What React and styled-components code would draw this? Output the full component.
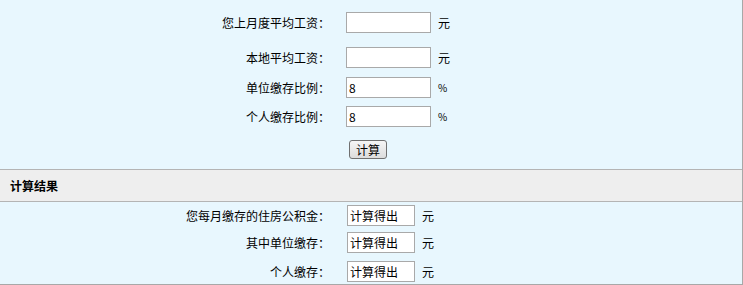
import React from 'react'
import styled, { createGlobalStyle } from 'styled-components'

const GlobalStyle = createGlobalStyle`
  body {
    margin: 0;
    font-family: 'Noto Sans CJK SC', 'Noto Sans', sans-serif;
    font-size: 12px;
    color: #000;
  }
`

const Page = styled.div`
  width: 743px;
  height: 285px;
  box-sizing: border-box;
  background: #e8f7fe;
  border-right: 1px solid #a8a8a8;
  border-bottom: 1px solid #a8a8a8;
`

const Form = styled.div`
  padding: 12px 0 10px;
`

const Row = styled.div`
  display: grid;
  grid-template-columns: 330px auto;
  column-gap: ${p => p.$gap || 16}px;
  align-items: center;
  margin-top: ${p => p.$top || 0}px;
  height: ${p => p.$h || 21}px;
`

const Label = styled.div`
  text-align: right;
  line-height: 21px;
  white-space: nowrap;
`

const Field = styled.div`
  display: flex;
  align-items: center;
`

const Input = styled.input`
  box-sizing: border-box;
  width: ${p => p.$w || 85}px;
  height: ${p => p.$h || 21}px;
  margin: 0;
  padding: 0 2px;
  border: 1px solid #a9a9a9;
  background: #fff;
  font-family: 'Noto Sans CJK SC', sans-serif;
  font-size: 12px;
  color: #000;
  outline: none;
`

const Unit = styled.span`
  margin-left: 7px;
  font-size: ${p => p.$small ? 10 : 12}px;
`

const Button = styled.button`
  margin-left: 3px;
  width: 38px;
  height: 19px;
  padding: 0;
  border: 1px solid #707070;
  border-radius: 3px;
  background: linear-gradient(#f6f6f6, #dcdcdc);
  font-family: 'Noto Sans CJK SC', sans-serif;
  font-size: 12px;
  line-height: 16px;
  color: #000;
`

const Header = styled.div`
  height: 33px;
  box-sizing: border-box;
  display: flex;
  align-items: center;
  padding-left: 10px;
  background: #eeeeee;
  border-top: 1px solid #b4b4b4;
  border-bottom: 1px solid #b4b4b4;
  font-weight: bold;
`

const Results = styled.div`
  padding-top: 3px;
`

const inputs = [
  { label: '您上月度平均工资：', value: '', unit: '元', top: 0 },
  { label: '本地平均工资：', value: '', unit: '元', top: 14 },
  { label: '单位缴存比例：', value: '8', unit: '%', top: 9 },
  { label: '个人缴存比例：', value: '8', unit: '%', top: 8 },
]

const results = [
  { label: '您每月缴存的住房公积金：', top: 0 },
  { label: '其中单位缴存：', top: 6 },
  { label: '个人缴存：', top: 8 },
]

export default function App() {
  return (
    <Page>
      <GlobalStyle />
      <Form>
        {inputs.map(item => (
          <Row key={item.label} $top={item.top}>
            <Label>{item.label}</Label>
            <Field>
              <Input defaultValue={item.value} />
              <Unit $small={item.unit === '%'}>{item.unit}</Unit>
            </Field>
          </Row>
        ))}
        <Row $top={13} $h={19}>
          <span />
          <Field>
            <Button>计算</Button>
          </Field>
        </Row>
      </Form>
      <Header>计算结果</Header>
      <Results>
        {results.map(item => (
          <Row key={item.label} $top={item.top} $gap={17}>
            <Label>{item.label}</Label>
            <Field>
              <Input $w={68} value="计算得出" readOnly />
              <Unit>元</Unit>
            </Field>
          </Row>
        ))}
      </Results>
    </Page>
  )
}
